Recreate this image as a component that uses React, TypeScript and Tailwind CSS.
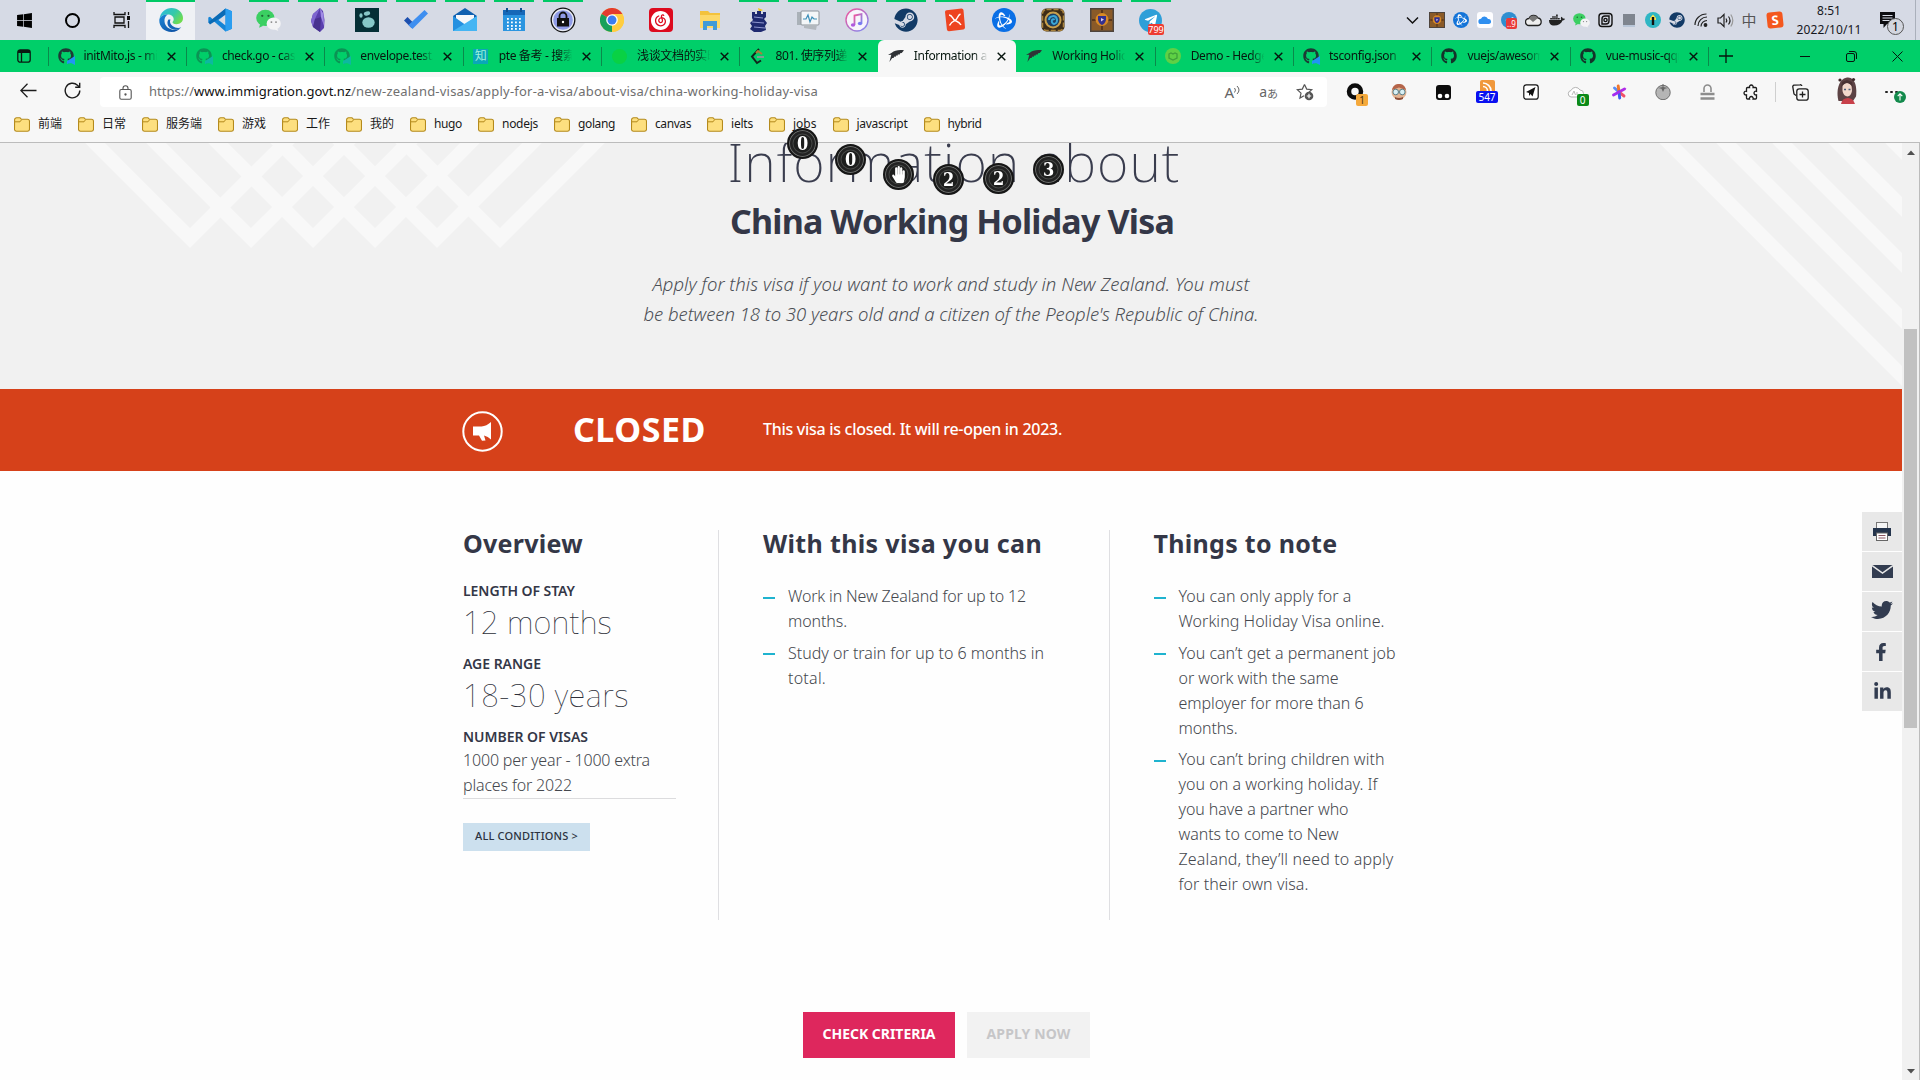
import { useLayoutEffect, useRef, useState, type ReactNode } from "react";
import { FaWindows, FaSteam, FaTelegramPlane, FaWeixin, FaDocker, FaGithub, FaTwitter, FaFacebookF, FaLinkedinIn, FaHandPaper } from "react-icons/fa";
import { SiNeteasecloudmusic, SiBattledotnet } from "react-icons/si";

/* A single line of text, tracked so that it spans exactly `w` pixels. */
function Line({ w, className = "", children }: { w: number; className?: string; children: string }) {
  const ref = useRef<HTMLSpanElement>(null);
  const [ls, setLs] = useState<number | null>(null);
  useLayoutEffect(() => {
    const el = ref.current;
    if (!el) return;
    el.style.letterSpacing = "0px";
    const natural = el.getBoundingClientRect().width;
    setLs((w - natural) / children.length);
  }, [w, children]);
  return (
    <span className={"block " + className}>
      <span ref={ref} className="inline-block whitespace-nowrap" style={ls === null ? undefined : { letterSpacing: ls + "px" }}>
        {children}
      </span>
    </span>
  );
}

/* ---------- taskbar icons ---------- */
const EdgeIcon = ({ s = 24 }: { s?: number }) => (
  <svg width={s} height={s} viewBox="0 0 24 24">
    <defs>
      <linearGradient id="ea" x1="0" y1="0" x2="1" y2="0.6"><stop offset="0" stopColor="#2bb8e6" /><stop offset="0.6" stopColor="#35c9a8" /><stop offset="1" stopColor="#6fdc50" /></linearGradient>
      <linearGradient id="eb" x1="0" y1="0" x2="1" y2="1"><stop offset="0" stopColor="#1a86d8" /><stop offset="1" stopColor="#0c4a9c" /></linearGradient>
    </defs>
    <path d="M0.5 11C1.5 4 6.500 0 12.500 0 19 0 24 4.800 24 10c0 4-3 6.200-6.500 6.200-3 0-4-1.200-4-1.900 0-.8 1.200-1.200 1.200-3.100C14.700 8.500 12 6.500 8.800 6.500 4.500 6.500 1 8.500.5 11z" fill="url(#ea)" />
    <path d="M.3 12C.5 8.500 4.500 6.500 8.800 6.500c-2.500 1.500-3.600 4-3.300 7C6 19 11 22 16 21.800c2.500 0 4.500-1.200 6-2.500C20 22.500 16.500 24 12.500 24 5.500 24 0 19 .3 12z" fill="url(#eb)" />
    <path d="M9.500 11.500c-1.500 2-1.500 5.500 1 8 3 2.800 8.500 3 11.800-.2-2.200 1-6 .9-8.800-1.300-2.200-1.700-3.200-4.300-2-6.500z" fill="#1465b8" />
  </svg>
);
const VscodeIcon = ({ s = 24 }: { s?: number }) => (
  <svg width={s} height={s} viewBox="0 0 24 24">
    <path d="M17.500.5 24 3.200v17.600l-6.500 2.700L5 12.600 2 15.200.3 14.300v-4.700L2 8.800 5 11.400z" fill="#1484d6" />
    <path d="M17.500 6.500v11L10.500 12z" fill="#d6dae5" />
    <path d="M.3 14.300 17.500.5v6L2 16.400z" fill="#0a6ab5" />
    <path d="M17.500.5 24 3.200v17.600l-6.500 2.700z" fill="#2a9df0" />
  </svg>
);
const WechatIcon = ({ s = 26 }: { s?: number }) => (
  <svg width={s} height={s} viewBox="0 0 24 24">
    <ellipse cx="9" cy="9.500" rx="8.800" ry="7.800" fill="#3bcf62" />
    <path d="M4 15l-1 4 4-2z" fill="#3bcf62" />
    <circle cx="6" cy="7.500" r="1.100" fill="#1d6b35" /><circle cx="12" cy="7.500" r="1.100" fill="#1d6b35" />
    <ellipse cx="17" cy="15" rx="6.800" ry="5.800" fill="#f3f3f5" />
    <path d="M20 19l1.500 3-4-1.500z" fill="#f3f3f5" />
    <circle cx="14.800" cy="13.500" r=".9" fill="#888" /><circle cx="19.200" cy="13.500" r=".9" fill="#888" />
  </svg>
);
const ObsidianIcon = () => (
  <svg width="24" height="24" viewBox="0 0 24 24">
    <path d="M14 0 17 3 18.500 12 18 20 14 24 7 19 5 13 7 6z" fill="#5a3fae" />
    <path d="M14 0 9 11 7 19 5 13 7 6z" fill="#7d66cf" /><path d="M14 0l1 9 3 9-.5-12z" fill="#a08be6" /><path d="M9 11l6-2-1 15-7-5z" fill="#47318f" />
  </svg>
);
const LogseqIcon = () => (
  <svg width="24" height="24" viewBox="0 0 24 24"><rect width="24" height="24" fill="#052f36" />
    <ellipse cx="13.500" cy="14.500" rx="6.200" ry="5.200" fill="#86c8c8" /><ellipse cx="12" cy="5.500" rx="3.200" ry="2" fill="#86c8c8" transform="rotate(-15 12 5.500)" /><ellipse cx="6" cy="7.500" rx="1.600" ry="2.300" fill="#86c8c8" />
  </svg>
);
const TodoIcon = () => (
  <svg width="24" height="24" viewBox="0 0 24 24"><path d="M0 12.500 3.500 9 11 16.500 7.500 20z" fill="#1d4fae" /><path d="M7.500 20 4.500 17 20.500 2 24 5.500 8.500 21z" fill="#3f8ff0" /></svg>
);
const MailIcon = () => (
  <svg width="24" height="24" viewBox="0 0 24 24"><path d="M0 8 12 0l12 8v4H0z" fill="#1160b0" /><path d="M3 7h18v10H3z" fill="#f6f7fa" /><path d="M0 8l12 8.500L24 8v15H0z" fill="#2590e0" /><path d="M0 23 24 8v15z" fill="#45b5f3" /></svg>
);
const CalendarIcon = () => (
  <svg width="24" height="24" viewBox="0 0 24 24"><rect x="1" y="2" width="22" height="21" fill="#2b95e0" /><rect x="1" y="2" width="22" height="5" fill="#1668b8" /><path d="M5 0v4M19 0v4" stroke="#0f4f92" strokeWidth="2" />
    {[10, 13.500, 17, 20].map((y) => [5, 9, 13, 17].map((x) => <rect key={x + "-" + y} x={x} y={y} width="1.800" height="1.800" fill="#fff" />))}
  </svg>
);
const LockIcon = () => (
  <svg width="26" height="26" viewBox="0 0 26 26"><circle cx="13" cy="13" r="11.800" fill="#e6e9f2" stroke="#111" strokeWidth="1.300" /><circle cx="13" cy="13" r="9.800" fill="#8f9be6" /><path d="M9.500 12V9a3.500 3.500 0 0 1 7 0v3" fill="none" stroke="#111" strokeWidth="1.800" /><rect x="7" y="11" width="12" height="8.500" fill="#111" /><circle cx="13" cy="15" r="1.200" fill="#fff" /></svg>
);
const ChromeIcon = () => (
  <svg width="24" height="24" viewBox="0 0 24 24"><circle cx="12" cy="12" r="12" fill="#ffcd40" /><path d="M12 12 1.600 6A12 12 0 0 1 22.400 6z" fill="#e33b2e" /><path d="M12 12 1.600 6A12 12 0 0 0 12 24z" fill="#17a05a" /><path d="M12 6h10.400A12 12 0 0 1 12 24l5-9z" fill="#ffcd40" /><circle cx="12" cy="12" r="5.800" fill="#fff" /><circle cx="12" cy="12" r="4.500" fill="#3c7df0" /></svg>
);
const NeteaseIcon = () => (
  <span className="flex h-6 w-6 items-center justify-center rounded bg-[#dd0a1e] text-[19px] text-white"><SiNeteasecloudmusic /></span>
);
const ExplorerIcon = () => (
  <svg width="24" height="24" viewBox="0 0 24 24"><path d="M2 3h8l2 2h10v15H2z" fill="#f3c23c" /><path d="M2 7h20v13H2z" fill="#fcd868" /><path d="M5 13h14v9h-4v-4H9v4H5z" fill="#3f9bd8" /></svg>
);
const CastleIcon = () => (
  <svg width="24" height="24" viewBox="0 0 24 24"><path d="M11 0l5 2-4 2z" fill="#f0c818" /><path d="M5 4h3v2h2V3h4v3h2V4h3v5l-2 2 3 4-2 3 1 4-5 2H7l-4-3 2-3-2-3 3-3-1-2z" fill="#1f2a70" /><path d="M7 9l9 1M5 14l12 1M7 19l11 1" stroke="#8f97d0" strokeWidth="1" /></svg>
);
const MonitorIcon = () => (
  <svg width="24" height="24" viewBox="0 0 24 24"><path d="M1 4h5v13H1z" fill="#aab1b8" /><rect x="5" y="3" width="18" height="14" rx="1" fill="#f3f6f8" stroke="#8d949b" /><path d="M7 11h3l2-4 2 7 2-5 2 2h3" fill="none" stroke="#3c8fb8" strokeWidth="1.200" /><path d="M8 17h13l-1 5-12-2z" fill="#b3b8be" /></svg>
);
const MusicIcon = () => (
  <svg width="24" height="24" viewBox="0 0 24 24"><defs><linearGradient id="mu" x1="0" y1="0" x2="1" y2="1"><stop offset="0" stopColor="#f2559a" /><stop offset="1" stopColor="#7a8bf5" /></linearGradient></defs><circle cx="12" cy="12" r="11" fill="#f7f5fb" stroke="url(#mu)" strokeWidth="1.400" /><path d="M9.500 17V7.500l7-1.500v9.500" fill="none" stroke="url(#mu)" strokeWidth="1.800" /><ellipse cx="8" cy="17" rx="2.200" ry="1.800" fill="#b05ade" /><ellipse cx="15" cy="15.500" rx="2.200" ry="1.800" fill="#7a7bf0" /></svg>
);
const XmindIcon = () => (
  <svg width="24" height="24" viewBox="0 0 24 24"><path d="M3.500 2.200 18.500.6q1.800 0 2 1.600L22 19.500q0 1.700-1.600 1.900L6 23.200q-1.800.1-2.100-1.600L2 4q0-1.600 1.500-1.800z" fill="#ee4420" /><path d="M6 7c3.500 0 3.500 4.500 6 5.500s4 1 6 4.500M17.500 6c-3 1-3 5.500-5.500 6.500S8 14 6.500 17.500" fill="none" stroke="#fff" strokeWidth="1.500" /></svg>
);
const Round = ({ bg, size, children }: { bg: string; size: string; children: ReactNode }) => (
  <span className={"flex items-center justify-center rounded-full text-white " + size + " " + bg}>{children}</span>
);
const HearthIcon = ({ center = "#3ba7d6" }: { center?: string }) => (
  <svg width="24" height="24" viewBox="0 0 24 24"><rect x=".5" y=".5" width="23" height="23" rx="5" fill="#3d2c17" /><rect x="1.500" y="1.500" width="21" height="21" rx="4" fill="none" stroke="#a9823d" strokeWidth="1.500" strokeDasharray="5 2" /><circle cx="12" cy="12" r="8.500" fill="#c9a04c" /><circle cx="12" cy="12" r="6.500" fill="#1d3f63" /><path d="M8 12a4 4 0 1 1 5 4 3 3 0 0 1-2-4 1.500 1.500 0 0 1 2.500 0" fill="none" stroke={center} strokeWidth="2" /></svg>
);
const DeckIcon = ({ s = 24 }: { s?: number }) => (
  <svg width={s} height={s} viewBox="0 0 24 24"><rect width="24" height="24" fill="#4e443d" /><rect x="1.500" y="1.500" width="21" height="21" fill="#8a5a28" /><path d="M12 2v20M2 12h20" stroke="#5b371a" strokeWidth="2" /><circle cx="12" cy="11.500" r="6.500" fill="#d98a25" /><path d="M8 8h8v4q-1 4-4 5-3-1-4-5z" fill="#33308f" /><path d="M11 10l3 1.500-3 2z" fill="#d9c9f0" /></svg>
);
const TelegramIcon = () => (
  <span className="relative">
    <Round bg="bg-[#2f9fd8]" size="h-[23px] w-[23px] text-[14px]"><FaTelegramPlane /></Round>
    <span className="absolute -bottom-[3px] left-[9px] w-4 rounded-[2px] bg-[#ee3b32] text-center text-[9px] leading-[11px] text-white">799</span>
  </span>
);
const TaskviewIcon = () => (
  <svg width="18" height="18" viewBox="0 0 18 18" fill="none" stroke="#111" strokeWidth="1.300"><path d="M1 1v2.500h11V1M1 17v-2.500h11V17M2 6h9v6H2zM15.500 1v3M15.500 10v7" /><path d="M14 5h3v4h-3z" fill="#111" stroke="none" /></svg>
);

const APPS: { icon: ReactNode; open?: boolean; active?: boolean }[] = [
  { icon: <EdgeIcon />, active: true },
  { icon: <VscodeIcon /> },
  { icon: <WechatIcon s={25} />, open: true },
  { icon: <ObsidianIcon />, open: true },
  { icon: <LogseqIcon />, open: true },
  { icon: <TodoIcon />, open: true },
  { icon: <MailIcon />, open: true },
  { icon: <CalendarIcon />, open: true },
  { icon: <LockIcon />, open: true },
  { icon: <ChromeIcon /> },
  { icon: <NeteaseIcon /> },
  { icon: <ExplorerIcon /> },
  { icon: <CastleIcon />, open: true },
  { icon: <MonitorIcon />, open: true },
  { icon: <MusicIcon />, open: true },
  { icon: <span className="text-[24px] text-[#123a66]"><FaSteam /></span>, open: true },
  { icon: <XmindIcon />, open: true },
  { icon: <Round bg="bg-[#0a6fe6]" size="h-6 w-6 text-[17px]"><SiBattledotnet /></Round>, open: true },
  { icon: <HearthIcon />, open: true },
  { icon: <DeckIcon />, open: true },
  { icon: <TelegramIcon />, open: true },
];

const TRAY: ReactNode[] = [
  <DeckIcon s={16} />,
  <Round bg="bg-[#1474d8]" size="h-4 w-4 text-[12px]"><SiBattledotnet /></Round>,
  <svg width="16" height="16" viewBox="0 0 16 16"><rect width="16" height="16" rx="3" fill="#fdfdff" /><path d="M4 12a2.600 2.600 0 0 1 0-5.200A3.800 3.800 0 0 1 11 7a2.500 2.500 0 0 1 1 5z" fill="#2f8ff0" /></svg>,
  <span className="relative"><Round bg="bg-[#2f8fd0]" size="h-4 w-4 text-[9px]"><FaTelegramPlane /></Round><span className="absolute -bottom-px left-[5px] w-[11px] rounded-[2px] bg-[#e93a3a] text-center text-[8px] leading-[11px] text-white">..9</span></span>,
  <svg width="17" height="14" viewBox="0 0 17 14"><path d="M4 12.500a3.500 3.500 0 0 1 0-7A5 5 0 0 1 13 5a3.800 3.800 0 0 1 0 7.500z" fill="#eee" stroke="#222" strokeWidth="1.300" /><path d="M4 5.500A5 5 0 0 1 13 5L8 9z" fill="#777" /></svg>,
  <FaDocker className="text-[16px] text-[#222]" />,
  <WechatIcon s={17} />,
  <svg width="15" height="16" viewBox="0 0 15 16" fill="none" stroke="#111" strokeWidth="1.400"><rect x="1" y="1.500" width="13" height="13" rx="3" /><path d="M4 12V7a3 3 0 0 1 3-3h4v5a3 3 0 0 1-3 3z" /><circle cx="7.500" cy="8" r="1.600" /></svg>,
  <svg width="12" height="13" viewBox="0 0 12 13"><rect width="12" height="13" fill="#7f858f" /><path d="M0 11h12v2H0z" fill="#b9c6d8" /></svg>,
  <svg width="16" height="16" viewBox="0 0 16 16"><circle cx="8" cy="8" r="8" fill="#2fb6c4" /><path d="M8 2.500 11 6v2H5V6z" fill="#ffe34d" /><path d="M6.800 5h2.400v8H6.800z" fill="#111" /></svg>,
  <FaSteam className="text-[16px] text-[#123a66]" />,
  <svg width="14" height="14" viewBox="0 0 14 14" fill="none" stroke="#222" strokeWidth="1.200"><path d="M1 12C1 6 6 1 12.500 1M4 13C4 8 8 4 13 4M7 13.500C7 10 10 7.500 13 7.500" /><circle cx="11.500" cy="12" r="1.300" fill="#222" /></svg>,
  <svg width="17" height="15" viewBox="0 0 17 15" fill="none" stroke="#222" strokeWidth="1.200"><path d="M1 5v5h2.500L7 13.500v-12L3.500 5z" /><path d="M9 5.500q1.500 2 0 4M11.500 3.500q3 4 0 8" /><path d="M13.800 1.500q4 6 0 12" stroke="#999" /></svg>,
];

function Taskbar() {
  return (
    <header className="flex h-10 shrink-0 bg-[#d6dae5]">
      <div className="flex h-10 w-12 items-center justify-center"><FaWindows className="text-[17px] text-black" /></div>
      <div className="flex h-10 w-[49px] items-center justify-center"><span className="h-[15px] w-[15px] rounded-full border-2 border-black" /></div>
      <div className="flex h-10 w-[49px] items-center justify-center"><TaskviewIcon /></div>
      {APPS.map((a, i) => (
        <div key={i} className={"flex h-10 w-[49px] flex-col items-center " + (a.active ? "bg-[#eff1f5]" : "")}>
          <span className={"h-0.5 shrink-0 " + (a.active ? "w-[49px] bg-[#00c965]" : a.open ? "w-10 bg-[#00c965]" : "w-10")} />
          <span className="flex flex-1 items-center justify-center pb-0.5">{a.icon}</span>
        </div>
      ))}
      <div className="ml-auto flex h-10 items-center">
        <svg className="mr-[6px]" width="13" height="9" viewBox="0 0 13 9" fill="none" stroke="#111" strokeWidth="1.500"><path d="M1 1.500 6.500 7 12 1.500" /></svg>
        {TRAY.map((t, i) => (
          <span key={i} className="flex w-6 items-center justify-center">{t}</span>
        ))}
        <span className="w-6 text-center text-[15px] leading-none text-[#555]">中</span>
        <span className="ml-1.5 flex h-4 w-4 -rotate-6 items-center justify-center rounded-[3px] bg-[#f4571e] text-[13px] font-bold leading-none text-white">S</span>
        <div className="ml-3 flex w-[68px] flex-col items-center text-[12px] leading-[19px] text-[#16181d]">
          <Line w={24}>8:51</Line>
          <Line w={65}>2022/10/11</Line>
        </div>
        <div className="relative ml-4 h-10 w-[22px]">
          <svg className="mt-3" width="17" height="17" viewBox="0 0 17 17"><path d="M1 0h15v12H8l-3.500 4v-4H1z" fill="#0c0c10" /><path d="M3.500 3.500h10M3.500 6h10M3.500 8.500h7" stroke="#d6dae5" /></svg>
          <span className="absolute left-[8px] top-[18px] flex h-[17px] w-[17px] items-center justify-center rounded-full border border-[#555] bg-[#d3d6df] text-[12px] leading-none">1</span>
        </div>
        <span className="ml-3.5 mr-1 h-10 w-px bg-[#aab0bb]" />
      </div>
    </header>
  );
}

/* ---------- browser tabs ---------- */
const GhCode = ({ dim }: { dim?: boolean }) => (
  <span className={"relative text-[16px] text-[#1d3a35] " + (dim ? "opacity-40" : "")}><FaGithub /><svg className="absolute -bottom-px -right-px" width="9" height="9" viewBox="0 0 9 9"><path d="M9 0v9L5 7 1 8V5z" fill="#2196f3" /></svg></span>
);
const Fern = () => (
  <svg width="17" height="14" viewBox="0 0 17 14"><path d="M17 1C12 0 7 1 4 3.500L0 6l3.500-.3L1.500 13.500l3-4.500h1.500l.5-1.500 1.500.5.500-1.500 1.500.3.500-1.300 2 0 .3-1.500 1.800-.2z" fill="#2f3236" /></svg>
);
const TABS: { label: string; icon: ReactNode; active?: boolean }[] = [
  { label: "initMito.js - mito", icon: <GhCode /> },
  { label: "check.go - casbin", icon: <GhCode dim /> },
  { label: "envelope.test.ts", icon: <GhCode dim /> },
  { label: "pte 备考 - 搜索", icon: <span className="flex h-[15px] w-[15px] items-center justify-center bg-[#0aa7b8] text-[12px] leading-none text-[#9ff0da]">知</span> },
  { label: "浅谈文档的实时", icon: <span className="h-[15px] w-[15px] rounded-full bg-[#0fd22c] opacity-60" /> },
  { label: "801. 使序列递增", icon: <svg width="15" height="17" viewBox="0 0 15 17" fill="none" strokeWidth="2"><path d="M9 1 2 8.500 7 15l4-2.500" stroke="#10261c" /><path d="M6 5l2-2 4 3" stroke="#a9803a" /><path d="M7 9h7" stroke="#7f9d92" /></svg> },
  { label: "Information about", icon: <Fern />, active: true },
  { label: "Working Holiday", icon: <Fern /> },
  { label: "Demo - HedgeDoc", icon: <svg width="16" height="16" viewBox="0 0 16 16"><circle cx="8" cy="8" r="8" fill="#5fd045" /><path d="M4 6l2-1 2 1 2-1 2 1v4l-4 2-4-2z" fill="none" stroke="#3da13a" strokeWidth="1.300" /></svg> },
  { label: "tsconfig.json", icon: <GhCode /> },
  { label: "vuejs/awesome", icon: <FaGithub className="text-[16px] text-[#14332a]" /> },
  { label: "vue-music-qqmu", icon: <FaGithub className="text-[16px] text-[#14332a]" /> },
];

function TabStrip() {
  return (
    <div className="flex h-8 shrink-0 items-stretch bg-[#00cf69] text-[12px] text-[#07170f]">
      <div className="flex w-[47.500px] items-center justify-center">
        <svg width="14" height="14" viewBox="0 0 14 14" fill="none" stroke="#0a1a12" strokeWidth="1.300"><rect x=".8" y=".8" width="12.400" height="12.400" rx="2.500" /><path d="M1 2.500h12" strokeWidth="3" /><path d="M4.500 3v10" /></svg>
      </div>
      {TABS.map((t, i) => (
        <div
          key={i}
          className={
            "flex w-[138.4px] shrink-0 items-center pl-[10px] " + (t.active ? "rounded-t-md bg-[#f7f7f7]" : "")
          }
        >
          <span className={"-ml-[10px] mr-[9px] h-[19px] w-px " + (t.active || TABS[i - 1]?.active ? "" : "bg-[#0a8a4b]")} />
          <span className="flex w-4 justify-center">{t.icon}</span>
          <span className="ml-[10px] w-[75px] overflow-hidden whitespace-nowrap tracking-[-0.35px] [mask-image:linear-gradient(to_right,black_80%,transparent_98%)]">{t.label}</span>
          <svg className="ml-2" width="9" height="9" viewBox="0 0 9 9" stroke="#06140d" strokeWidth="1.400"><path d="M.7.700l7.600 7.600M8.300.700.700 8.300" /></svg>
        </div>
      ))}
      <div className="flex w-[36px] items-center">
        <span className="mr-[10px] h-[19px] w-px bg-[#0a8a4b]" />
        <svg width="14" height="14" viewBox="0 0 14 14" stroke="#06140d" strokeWidth="1.300"><path d="M7 0v14M0 7h14" /></svg>
      </div>
      <div className="ml-auto flex items-center">
        <span className="flex w-[46px] justify-center"><span className="h-px w-2.5 bg-[#06140d]" /></span>
        <span className="flex w-[46px] justify-center"><svg width="11" height="11" viewBox="0 0 11 11" fill="none" stroke="#06140d"><rect x=".5" y="2.500" width="8" height="8" rx="1.500" /><path d="M3 .500h5a2.500 2.500 0 0 1 2.500 2.500v5" /></svg></span>
        <span className="flex w-[46px] justify-center"><svg width="11" height="11" viewBox="0 0 11 11" stroke="#06140d"><path d="M.5.500l10 10M10.500.500l-10 10" /></svg></span>
      </div>
    </div>
  );
}

/* ---------- toolbar ---------- */
const EXTENSIONS: ReactNode[] = [
  <span className="relative"><svg width="18" height="18" viewBox="0 0 18 18"><circle cx="9" cy="8.500" r="6" fill="none" stroke="#0c0c0c" strokeWidth="4.500" /></svg><span className="absolute left-[10px] top-[11px] flex h-3 w-3 items-center justify-center rounded-[2px] bg-[#f5a93c] text-[10px] leading-none text-[#4a3313]">1</span></span>,
  <svg width="16" height="18" viewBox="0 0 16 18"><circle cx="8" cy="9" r="7.500" fill="#e3b493" /><path d="M1 7C2 2 5 1 8 1s6 1 7 6L8 4.500z" fill="#b5654a" /><circle cx="4.700" cy="9" r="2.800" fill="#d8f0f5" stroke="#5b7f88" /><circle cx="11.300" cy="9" r="2.800" fill="#d8f0f5" stroke="#5b7f88" /><path d="M4 14q4 2 8 0v2q-4 2-8 0z" fill="#8d4e39" /></svg>,
  <svg width="15" height="15" viewBox="0 0 15 15"><rect width="15" height="15" rx="3" fill="#0c0c0c" /><circle cx="4" cy="11" r="2.300" fill="#fff" /><circle cx="11" cy="11" r="2.300" fill="#fff" /></svg>,
  <span className="relative flex h-6 w-[22px] flex-col items-center"><svg width="15" height="13" viewBox="0 0 15 13"><rect width="15" height="13" rx="2" fill="#f0983c" /><path d="M3 3a8 8 0 0 1 8 8M3 6.500A4.500 4.500 0 0 1 7.500 11" fill="none" stroke="#fff" strokeWidth="1.600" /></svg><span className="absolute top-[11px] flex h-3 w-[22px] items-center justify-center rounded-[2px] bg-[#0a10f0] text-[10px] leading-none text-white">547</span></span>,
  <svg width="16" height="16" viewBox="0 0 16 16"><rect x=".8" y=".8" width="14.400" height="14.400" rx="2.500" fill="#fff" stroke="#111" strokeWidth="1.200" /><path d="M12.500 3 9.500 12.500 7.500 10 6 12V9L3 8z" fill="#111" /></svg>,
  <span className="relative"><svg width="17" height="14" viewBox="0 0 17 14"><path d="M4 12a3.300 3.300 0 0 1 0-6.500A5 5 0 0 1 13 5a3.500 3.500 0 0 1 0 7z" fill="#fff" stroke="#b5b5b5" /><path d="M5 10l2-4 1.500 4M10 7v3" stroke="#bbb" fill="none" /></svg><span className="absolute left-[10px] top-[9px] flex h-3 w-3 items-center justify-center rounded-[2px] bg-[#0b8a18] text-[10px] leading-none text-white">0</span></span>,
  <svg width="16" height="16" viewBox="0 0 16 16" strokeWidth="2.900" strokeLinecap="round"><path d="M8 8 3.500 4" stroke="#5a8cf5" /><path d="M8 8 7.200 2" stroke="#f0762c" /><path d="M8 8l5.500-3" stroke="#b02be8" /><path d="M8 8l5 4" stroke="#f0506a" /><path d="M8 8l.7 6" stroke="#3c5df0" /><path d="M8 8l-5.500 3" stroke="#a52bf0" /></svg>,
  <svg width="16" height="16" viewBox="0 0 16 16"><circle cx="8" cy="8.500" r="7.200" fill="#b5b5b5" stroke="#6e6e6e" /><path d="M3 4l5-1 5 1-3.500.8L8 8 6.500 4.800z" fill="#666" /><path d="M8 0v4" stroke="#666" /></svg>,
  <svg width="15" height="17" viewBox="0 0 15 17" fill="none" stroke="#8d8d8d" strokeWidth="1.600"><path d="M4 8V4.500a3.500 3.500 0 0 1 7 0V8" /><path d="M.5 10h14M.5 14.500h14" strokeWidth="2.600" /></svg>,
  <svg width="16" height="17" viewBox="0 0 16 17" fill="none" stroke="#1c1c1c" strokeWidth="1.300"><path d="M4.500 3.500h2a1.900 1.900 0 1 1 3.600 0h2.400a1 1 0 0 1 1 1v2.800a1.900 1.900 0 1 0 0 3.600V14a1 1 0 0 1-1 1h-2.400a1.900 1.900 0 1 0-3.600 0h-2a1 1 0 0 1-1-1v-3.100a1.900 1.900 0 1 1 0-3.600V4.500a1 1 0 0 1 1-1z" /></svg>,
];

function Toolbar() {
  return (
    <div className="flex h-9 shrink-0 items-center bg-[#f7f7f7] pt-1">
      <svg className="-mt-1 ml-5" width="17" height="15" viewBox="0 0 17 15" fill="none" stroke="#1c1c1c" strokeWidth="1.300"><path d="M16.500 7.500H1M7.500.800.800 7.500l6.700 6.700" /></svg>
      <svg className="-mt-1 ml-[27px]" width="17" height="17" viewBox="0 0 17 17" fill="none" stroke="#1c1c1c" strokeWidth="1.400"><path d="M15.800 8.500a7.300 7.300 0 1 1-2.300-5.300l2 2" /><path d="M15.700.800v4.500h-4.500" /></svg>
      <div className="ml-[19px] flex h-[30px] w-[1227px] items-center rounded bg-white">
        <svg className="ml-[19px]" width="13" height="15" viewBox="0 0 13 15" fill="none" stroke="#555" strokeWidth="1.100"><rect x=".8" y="4.500" width="11.400" height="9.700" rx="1.500" /><path d="M4 4.500V3.300a2.500 2.500 0 0 1 5 0v1.200" /><circle cx="6.500" cy="9.500" r=".6" fill="#555" /></svg>
        <div className="ml-[17px] flex text-[13px] text-[#6f6f6f]">
          <Line w={45}>https://</Line>
          <Line w={157} className="text-[#111]">www.immigration.govt.nz</Line>
          <Line w={467}>/new-zealand-visas/apply-for-a-visa/about-visa/china-working-holiday-visa</Line>
        </div>
        <div className="ml-auto flex items-center pr-[13px] text-[#666]">
          <span className="mr-[19px] flex text-[15px] leading-none">A<svg width="6" height="11" viewBox="0 0 6 11" fill="none" stroke="#666"><path d="M.5 3q2 2 0 4.500M3 1q4 4 0 8" /></svg></span>
          <span className="mr-[18px] flex items-end text-[14px] leading-none">a<span className="text-[11px]">あ</span></span>
          <svg width="18" height="18" viewBox="0 0 18 18" fill="none" stroke="#555" strokeWidth="1.200"><path d="M8.500 1.500l2.200 4.600 5 .6-3.700 3.400M8.500 1.500 6.300 6.100l-5 .6 3.700 3.400-1 5L8 12.800" /><circle cx="13" cy="13" r="4.300" fill="#555" stroke="none" /><path d="M13 10.800v4.400M10.800 13h4.400" stroke="#fff" /></svg>
        </div>
      </div>
      <div className="ml-[6px] flex items-center">
        {EXTENSIONS.map((e, i) => (
          <span key={i} className="flex w-[44px] items-center justify-center">{e}</span>
        ))}
        <span className="ml-0.5 h-5 w-px bg-[#cfcfcf]" />
        <span className="flex w-[49px] justify-center">
          <svg width="17" height="17" viewBox="0 0 17 17" fill="none" stroke="#1c1c1c" strokeWidth="1.300"><path d="M4 11.500 2 10 .8 3a1.500 1.500 0 0 1 1.200-1.800L8 .800A1.500 1.500 0 0 1 9.800 2" /><rect x="4.800" y="4.800" width="11.400" height="11.400" rx="2.500" /><path d="M10.500 7.500v6M7.500 10.500h6" /></svg>
        </span>
        <span className="flex w-[43px] justify-center">
          <svg className="-mt-1" width="24" height="28" viewBox="0 0 24 28"><path d="M3.500 25C1 16 3 3 12 1.500c9-1 10 11.500 9 19l-3 4.500z" fill="#5d4345" /><path d="M7.500 9q4.500-4 9 0l.5 6q-1 5-4.500 5.500Q8.500 20 7.500 15z" fill="#f2d7cb" /><path d="M6 12q3-5 6-5t6 5l-1-6-5-2-5 2z" fill="#4a3234" /><path d="M6 28q1-6 7-6 5 0 7 6z" fill="#c8404a" /><path d="M9 13.500h2M13.500 13.500h2" stroke="#4a5d78" strokeWidth="1.500" /><circle cx="5" cy="4" r="1.600" fill="#3d2729" /><circle cx="18.500" cy="3.500" r="1.600" fill="#3d2729" /></svg>
        </span>
        <span className="relative ml-[13px] flex h-7 w-9 items-center gap-[2.500px] pl-1">
          <i className="h-[2.500px] w-[2.500px] rounded-full bg-[#222]" /><i className="h-[2.500px] w-[2.500px] rounded-full bg-[#222]" /><i className="h-[2.500px] w-[2.500px] rounded-full bg-[#222]" />
          <svg className="absolute left-[13px] top-[13px]" width="12" height="12" viewBox="0 0 12 12"><circle cx="6" cy="6" r="6" fill="#138a4c" /><path d="M6 9.500V3M3.700 5.200 6 2.900l2.300 2.300" fill="none" stroke="#fff" strokeWidth="1.100" /></svg>
        </span>
      </div>
    </div>
  );
}

const BOOKMARKS: [string, number][] = [
  ["前端", 24], ["日常", 24], ["服务端", 36], ["游戏", 24], ["工作", 24], ["我的", 24], ["hugo", 28], ["nodejs", 36],
  ["golang", 37], ["canvas", 36], ["ielts", 22], ["jobs", 23.500], ["javascript", 51], ["hybrid", 34],
];

function Bookmarks() {
  return (
    <div className="flex h-[35px] shrink-0 items-center gap-4 border-b border-[#bcbcbc] bg-[#f7f7f7] pl-3.5 text-[12px] text-[#1a1a1a]">
      {BOOKMARKS.map(([label, w]) => (
        <div key={label} className="flex items-center gap-2 pb-1.5 pt-1">
          <svg width="16" height="15" viewBox="0 0 16 15"><path d="M.6 2.800a2 2 0 0 1 2-2H6l1.500 1.500h6a2 2 0 0 1 2 2v7.900a2 2 0 0 1-2 2h-11a2 2 0 0 1-2-2z" fill="#fddf7f" stroke="#b48a1c" strokeWidth="1.100" /><path d="M1 4.800h5L7.500 2.800" fill="none" stroke="#b48a1c" /></svg>
          <Line w={w}>{label}</Line>
        </div>
      ))}
    </div>
  );
}

/* ---------- page ---------- */
const TIPS = [190, 251, 313, 375, 437, 500];
const STRIPES = [1669, 1726, 1782, 1838, 1895];

function Puck({ children }: { children: ReactNode }) {
  return (
    <span className="flex h-[31px] w-[31px] items-center justify-center rounded-full border-2 border-[#161616] bg-[#1d1e1d] font-['DejaVu_Serif'] text-[19px] font-bold leading-none text-white shadow-[inset_0_0_0_1px_#6d6f6d,inset_0_0_0_3.500px_#222,inset_0_0_0_4.500px_#454745]">
      <span className="flex scale-x-[0.85]">{children}</span>
    </span>
  );
}

function Hero() {
  return (
    <section className="relative flex h-[246px] flex-col items-center overflow-hidden bg-[#f1f1f1]">
      <svg className="absolute left-0 top-0" width="1902" height="246" viewBox="0 143 1902 246" fill="none" stroke="#f8f8f8" strokeWidth="14">
        {TIPS.map((x) => <path key={x} d={`M${x - 120} 118 L${x} 238 L${x + 120} 118`} />)}
        {STRIPES.map((x) => <path key={x} d={`M${x - 20} 123 l300 300`} />)}
      </svg>
      <h1 className="relative -mt-[17px] pl-1.5 font-['Noto_Sans'] text-[54px] font-extralight leading-[70px] text-[#3a3d4e]"><Line w={453}>Information about</Line></h1>
      <h2 className="relative mt-[5px] pl-0.5 font-['Noto_Sans'] text-[34px] font-bold leading-[40px] text-[#343747]"><Line w={444}>China Working Holiday Visa</Line></h2>
      <div className="relative mt-[28px] flex flex-col items-center font-['Noto_Sans'] text-[18.500px] font-light italic leading-[30px] text-[#4c4f55]">
        <Line w={597}>Apply for this visa if you want to work and study in New Zealand. You must</Line>
        <Line w={615}>be between 18 to 30 years old and a citizen of the People's Republic of China.</Line>
      </div>
    </section>
  );
}

function Banner() {
  return (
    <section className="flex h-[82px] items-center bg-[#d6411a] pl-[462px] text-white">
      <svg className="mt-0.5" width="41" height="41" viewBox="0 0 41 41"><circle cx="20.500" cy="20.500" r="19.200" fill="none" stroke="#fff" strokeWidth="2" /><path d="M11 15.500h8.500q5-.5 9.500-4.500v17.500q-3-3-7-4l1.500 5-3.500.2-3-5.200H11z" fill="#fff" /></svg>
      <Line w={133} className="ml-[70px] -mt-[3px] font-['Noto_Sans'] text-[34px] font-bold leading-10">CLOSED</Line>
      <Line w={299} className="ml-[57px] -mt-[3px] font-['Noto_Sans'] text-[16px] font-medium leading-6">This visa is closed. It will re-open in 2023.</Line>
    </section>
  );
}

const H = "font-['Noto_Sans'] text-[25px] font-bold leading-[27px] text-[#343747]";

function Bullets({ items }: { items: [string, number][][] }) {
  return (
    <ul className="mt-[27px] flex flex-col gap-[6.500px] font-['Noto_Sans'] text-[16px] font-[350] leading-[25px] text-[#44474d]">
      {items.map((lines, i) => (
        <li key={i} className="flex">
          <span className="mr-[13px] mt-[12.500px] h-0.5 w-3 shrink-0 bg-[#1fb3cf]" />
          <div>{lines.map(([t, w]) => <Line key={t} w={w}>{t}</Line>)}</div>
        </li>
      ))}
    </ul>
  );
}

function Fact({ label, lw, value, vw }: { label: string; lw: number; value?: string; vw?: number }) {
  return (
    <>
      <Line w={lw} className="font-['Noto_Sans'] text-[14px] font-semibold leading-5 text-[#343747]">{label}</Line>
      {value && <Line w={vw ?? 0} className="mb-[16.800px] mt-[6.500px] font-['Noto_Sans'] text-[31px] font-thin leading-[30px] text-[#2c2e38]">{value}</Line>}
    </>
  );
}

function Details() {
  return (
    <section className="mt-[59px] flex h-[390px] pl-[463px]">
      <div className="w-[256px] border-r border-[#dfdfe2] pr-[42px]">
        <Line w={120} className={H}>Overview</Line>
        <div className="mt-[23.500px] border-b border-[#dcdcde]">
          <Fact label="LENGTH OF STAY" lw={112} value="12 months" vw={149} />
          <Fact label="AGE RANGE" lw={78} value="18-30 years" vw={166} />
          <Fact label="NUMBER OF VISAS" lw={125} />
          <div className="font-['Noto_Sans'] pt-[0.500px] text-[16px] font-[350] leading-[25px] text-[#44474d]">
            <Line w={187}>1000 per year - 1000 extra</Line>
            <Line w={109}>places for 2022</Line>
          </div>
        </div>
        <button className="mt-[24px] flex h-7 w-[127px] items-center justify-center bg-[#cce0ee] font-['Noto_Sans'] text-[11px] font-medium text-[#2b3240]"><Line w={103}>{"ALL CONDITIONS >"}</Line></button>
      </div>
      <div className="w-[391px] border-r border-[#dfdfe2] pl-[44px]">
        <Line w={279} className={H}>With this visa you can</Line>
        <Bullets items={[[["Work in New Zealand for up to 12", 238], ["months.", 59]], [["Study or train for up to 6 months in", 256], ["total.", 38]]]} />
      </div>
      <div className="pl-[43.500px]">
        <Line w={184} className={H}>Things to note</Line>
        <Bullets
          items={[
            [["You can only apply for a", 173], ["Working Holiday Visa online.", 206]],
            [["You can’t get a permanent job", 217], ["or work with the same", 160], ["employer for more than 6", 185], ["months.", 59]],
            [["You can’t bring children with", 206], ["you on a working holiday. If", 199], ["you have a partner who", 170], ["wants to come to New", 160], ["Zealand, they’ll need to apply", 215], ["for their own visa.", 130]],
          ]}
        />
      </div>
    </section>
  );
}

const SHARE: ReactNode[] = [
  <svg width="18" height="19" viewBox="0 0 18 19"><rect x="3.500" y=".5" width="11" height="6" fill="#f6f6f6" stroke="#777" /><rect y="6" width="18" height="8" fill="#24344c" /><rect x="3.500" y="11" width="11" height="7.500" fill="#fff" stroke="#666" /><path d="M5.500 13.500h7M5.500 16h7" stroke="#8a5560" /></svg>,
  <svg width="21" height="13" viewBox="0 0 21 13"><rect width="21" height="13" fill="#323c50" /><path d="M0 .5 10.500 8 21 .5" fill="none" stroke="#e8e8e8" strokeWidth="1.500" /></svg>,
  <FaTwitter className="-mt-1 text-[22px]" />,
  <FaFacebookF className="-ml-0.5 text-[18px]" />,
  <FaLinkedinIn className="text-[19px]" />,
];

const PUCKS: [string, ReactNode][] = [
  ["left-[787px] top-[128px]", "0"],
  ["left-[835px] top-[144px]", "0"],
  ["left-[883px] top-[159px]", <FaHandPaper className="text-[17px]" />],
  ["left-[933px] top-[164px]", "2"],
  ["left-[983px] top-[163px]", "2"],
  ["left-[1033px] top-[154px]", "3"],
];

export default function App() {
  return (
    <div className="relative flex h-[1080px] w-[1920px] flex-col overflow-hidden bg-white font-['Noto_Sans','Noto_Sans_CJK_SC',sans-serif]">
      <Taskbar />
      <TabStrip />
      <Toolbar />
      <Bookmarks />
      <div className="flex min-h-0 flex-1">
        <main className="relative w-[1902px] bg-[#fefefe]">
          <Hero />
          <Banner />
          <Details />
          <div className="mt-[92px] flex gap-3 pl-[803px] font-['Noto_Sans'] text-[14px] font-bold">
            <button className="flex h-[46px] w-[152px] items-center justify-center bg-[#de275d] pb-1 text-white"><Line w={113}>CHECK CRITERIA</Line></button>
            <button className="flex h-[46px] w-[123px] items-center justify-center bg-[#f2f2f2] pb-1 text-[#c6c6c8]"><Line w={84}>APPLY NOW</Line></button>
          </div>
          <nav className="absolute right-0 top-[369px] flex flex-col gap-px text-[#323c50]">
            {SHARE.map((s, i) => (
              <span key={i} className="flex h-[39px] w-10 items-center justify-center bg-[#e8e8e8]">{s}</span>
            ))}
          </nav>
        </main>
        <aside className="flex w-[18px] flex-col items-center border-r border-[#bcbcbc] bg-[#f1f1f1]">
          <svg className="mt-[7px] shrink-0" width="8" height="5" viewBox="0 0 8 5"><path d="M0 5 4 .500 8 5z" fill="#505050" /></svg>
          <span className="mt-[174px] h-[399px] w-[13px] bg-[#c1c1c1]" />
          <svg className="mb-[6px] mt-auto shrink-0" width="8" height="5" viewBox="0 0 8 5"><path d="M0 0h8L4 4.500z" fill="#505050" /></svg>
        </aside>
      </div>
      {PUCKS.map(([pos, c]) => (
        <div key={pos} className={"absolute " + pos}><Puck>{c}</Puck></div>
      ))}
    </div>
  );
}
